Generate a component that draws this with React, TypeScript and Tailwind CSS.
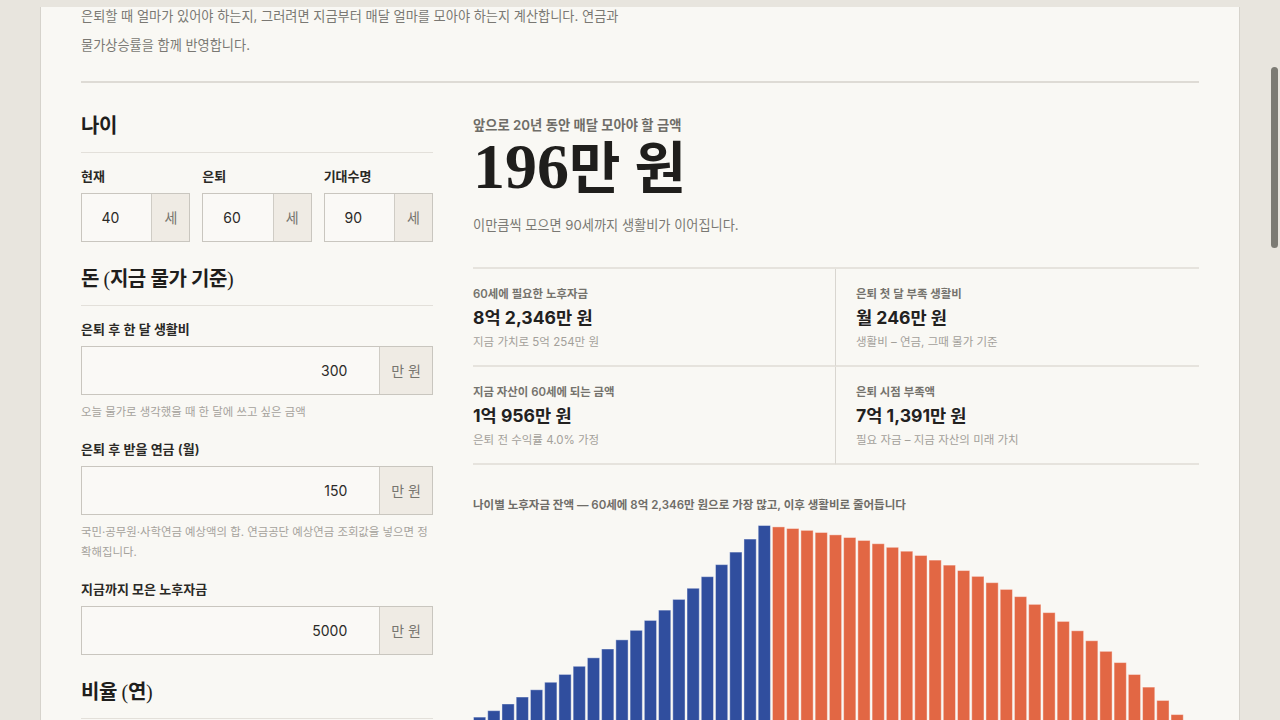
import React from "react";

const sans = "font-['Inter','Noto_Sans_CJK_KR',sans-serif]";
const serif = "font-['Liberation_Serif','Noto_Sans_CJK_KR',serif]";

// 나이별 잔액 (만 원): 40세 ~ 90세
function balances() {
  const need = 82346;
  const now = 5000;
  const infl = 0.025;
  const pre = 0.04;
  const post = 0.03;
  const grown = now * Math.pow(1 + pre, 20);
  const fv = (n: number) => (Math.pow(1 + pre, n) - 1) / pre;
  const out: number[] = [];
  for (let a = 40; a <= 60; a++) {
    out.push(now * Math.pow(1 + pre, a - 40) + ((need - grown) * fv(a - 40)) / fv(20));
  }
  const s60 = 150 * 12 * Math.pow(1 + infl, 20);
  const back: Record<number, number> = {};
  let b = 0;
  for (let a = 89; a >= 60; a--) {
    b = b / (1 + post) + s60 * Math.pow(1 + infl, a - 60);
    back[a] = b;
  }
  const k = need / back[60];
  for (let a = 61; a <= 90; a++) out.push(a === 90 ? 0 : back[a] * k);
  return out;
}

const data = balances();

function Section({ title, children }: { title: React.ReactNode; children: React.ReactNode }) {
  return (
    <section>
      <h2
        className={`${serif} border-b border-[#e3e0da] pb-3 text-[20px] leading-[28px] font-semibold tracking-[-0.02em] text-[#1f1e1c]`}
      >
        {title}
      </h2>
      <div className="mt-[14px]">{children}</div>
    </section>
  );
}

function Paren({ children }: { children: React.ReactNode }) {
  return <span className="font-normal">{children}</span>;
}

function Field({ label, help, children }: { label: string; help?: React.ReactNode; children: React.ReactNode }) {
  return (
    <div>
      <div className="mb-2 text-[13px] leading-[18px] font-semibold text-[#2a2926]">{label}</div>
      {children}
      {help && <p className="mt-[7px] text-[11.4px] leading-[20px] text-[#a5a29c]">{help}</p>}
    </div>
  );
}

function UnitInput({ value, unit, wide }: { value: string; unit: string; wide?: boolean }) {
  return (
    <div className="flex h-[49px] border border-[#c9c6bf] bg-[#faf9f6]">
      <input
        readOnly
        value={value}
        className="min-w-0 flex-1 bg-transparent pr-8 text-right text-[14px] text-[#2b2a28] outline-none"
      />
      <span
        className={`flex items-center border-l border-[#cfccc5] bg-[#efebe4] text-[14px] text-[#77756f] ${
          wide ? "px-[11px]" : "px-3"
        }`}
      >
        {unit}
      </span>
    </div>
  );
}

function Stat({ label, value, sub, right }: { label: string; value: string; sub: string; right?: boolean }) {
  return (
    <div className={`border-b-2 border-[#e6e3dd] pt-[17px] pb-[15px] ${right ? "pl-5" : "border-r border-r-[#d9d6d0] pr-5"}`}>
      <div className="text-[11.4px] leading-4 font-semibold text-[#75736d]">{label}</div>
      <div className="mt-1 text-[17.6px] leading-6 font-bold text-[#22211f]">{value}</div>
      <div className="mt-1 text-[11.5px] leading-4 text-[#a3a09a]">{sub}</div>
    </div>
  );
}

function Chart() {
  const w = 726;
  const h = 204;
  const slot = w / data.length;
  const max = Math.max(...data);
  return (
    <svg width={w} height={h} viewBox={`0 0 ${w} ${h}`} className="mt-3 block overflow-visible">
      {data.map((v, i) => {
        const bh = (v / max) * h;
        if (bh <= 0) return null;
        return (
          <rect
            key={i}
            x={i * slot + 0.5}
            y={h - bh + 0.5}
            width={slot - 2}
            height={bh}
            fill={i <= 20 ? "#304e9e" : "#e26744"}
            stroke="#ffffff"
            strokeOpacity={0.4}
          />
        );
      })}
    </svg>
  );
}

export default function App() {
  return (
    <div className={`${sans} relative h-[720px] overflow-hidden bg-[#e8e5de] pt-[7px]`}>
      <div className="mx-auto h-[900px] w-[1200px] overflow-hidden border-x border-[#d6d3cc] bg-[#f9f8f4] px-10">
        <p className="-mt-[5px] max-w-[545px] text-[13.2px] leading-[29px] text-[#7a7873]">
          은퇴할 때 얼마가 있어야 하는지, 그러려면 지금부터 매달 얼마를 모아야 하는지 계산합니다. 연금과
          물가상승률을 함께 반영합니다.
        </p>
        <div className="mt-[21px] border-t-2 border-[#dedbd5]" />

        <div className="mt-[29px] grid grid-cols-[352px_1fr] gap-x-10">
          <div className="flex flex-col gap-[23px]">
            <Section title="나이">
              <div className="grid grid-cols-3 gap-3">
                <Field label="현재">
                  <UnitInput value="40" unit="세" />
                </Field>
                <Field label="은퇴">
                  <UnitInput value="60" unit="세" />
                </Field>
                <Field label="기대수명">
                  <UnitInput value="90" unit="세" />
                </Field>
              </div>
            </Section>

            <Section
              title={
                <>
                  돈 <Paren>(</Paren>지금 물가 기준<Paren>)</Paren>
                </>
              }
            >
              <div className="flex flex-col gap-[18px]">
                <Field label="은퇴 후 한 달 생활비" help="오늘 물가로 생각했을 때 한 달에 쓰고 싶은 금액">
                  <UnitInput value="300" unit="만 원" wide />
                </Field>
                <Field
                  label="은퇴 후 받을 연금 (월)"
                  help="국민·공무원·사학연금 예상액의 합. 연금공단 예상연금 조회값을 넣으면 정확해집니다."
                >
                  <UnitInput value="150" unit="만 원" wide />
                </Field>
                <Field label="지금까지 모은 노후자금">
                  <UnitInput value="5000" unit="만 원" wide />
                </Field>
              </div>
            </Section>

            <Section
              title={
                <>
                  비율 <Paren>(</Paren>연<Paren>)</Paren>
                </>
              }
            >
              <div className="grid grid-cols-2 gap-3">
                <Field label="은퇴 전 수익률">
                  <UnitInput value="4" unit="%" />
                </Field>
                <Field label="물가상승률">
                  <UnitInput value="2.5" unit="%" />
                </Field>
              </div>
            </Section>
          </div>

          <div className="pt-1">
            <div className="text-[13.3px] leading-[18px] font-semibold text-[#6f6d68]">
              앞으로 20년 동안 매달 모아야 할 금액
            </div>
            <div className={`${serif} mt-px leading-none font-bold text-[#1f1e1c]`}>
              <span className="text-[64px]">196</span>
              <span className="text-[56px]">만 원</span>
            </div>
            <p className="mt-4 text-[13.2px] leading-5 text-[#7a7873]">이만큼씩 모으면 90세까지 생활비가 이어집니다.</p>

            <div className="mt-8 grid grid-cols-2 border-t-2 border-[#e6e3dd]">
              <Stat label="60세에 필요한 노후자금" value="8억 2,346만 원" sub="지금 가치로 5억 254만 원" />
              <Stat right label="은퇴 첫 달 부족 생활비" value="월 246만 원" sub="생활비 – 연금, 그때 물가 기준" />
              <Stat label="지금 자산이 60세에 되는 금액" value="1억 956만 원" sub="은퇴 전 수익률 4.0% 가정" />
              <Stat right label="은퇴 시점 부족액" value="7억 1,391만 원" sub="필요 자금 – 지금 자산의 미래 가치" />
            </div>

            <div className="mt-8 text-[11.5px] leading-4 font-semibold text-[#6f6d68]">
              나이별 노후자금 잔액 — 60세에 8억 2,346만 원으로 가장 많고, 이후 생활비로 줄어듭니다
            </div>
            <Chart />
          </div>
        </div>
      </div>
      <div className="absolute right-[2px] top-[67px] h-[181px] w-[7px] rounded-full bg-[#7c7b74]" />
    </div>
  );
}
